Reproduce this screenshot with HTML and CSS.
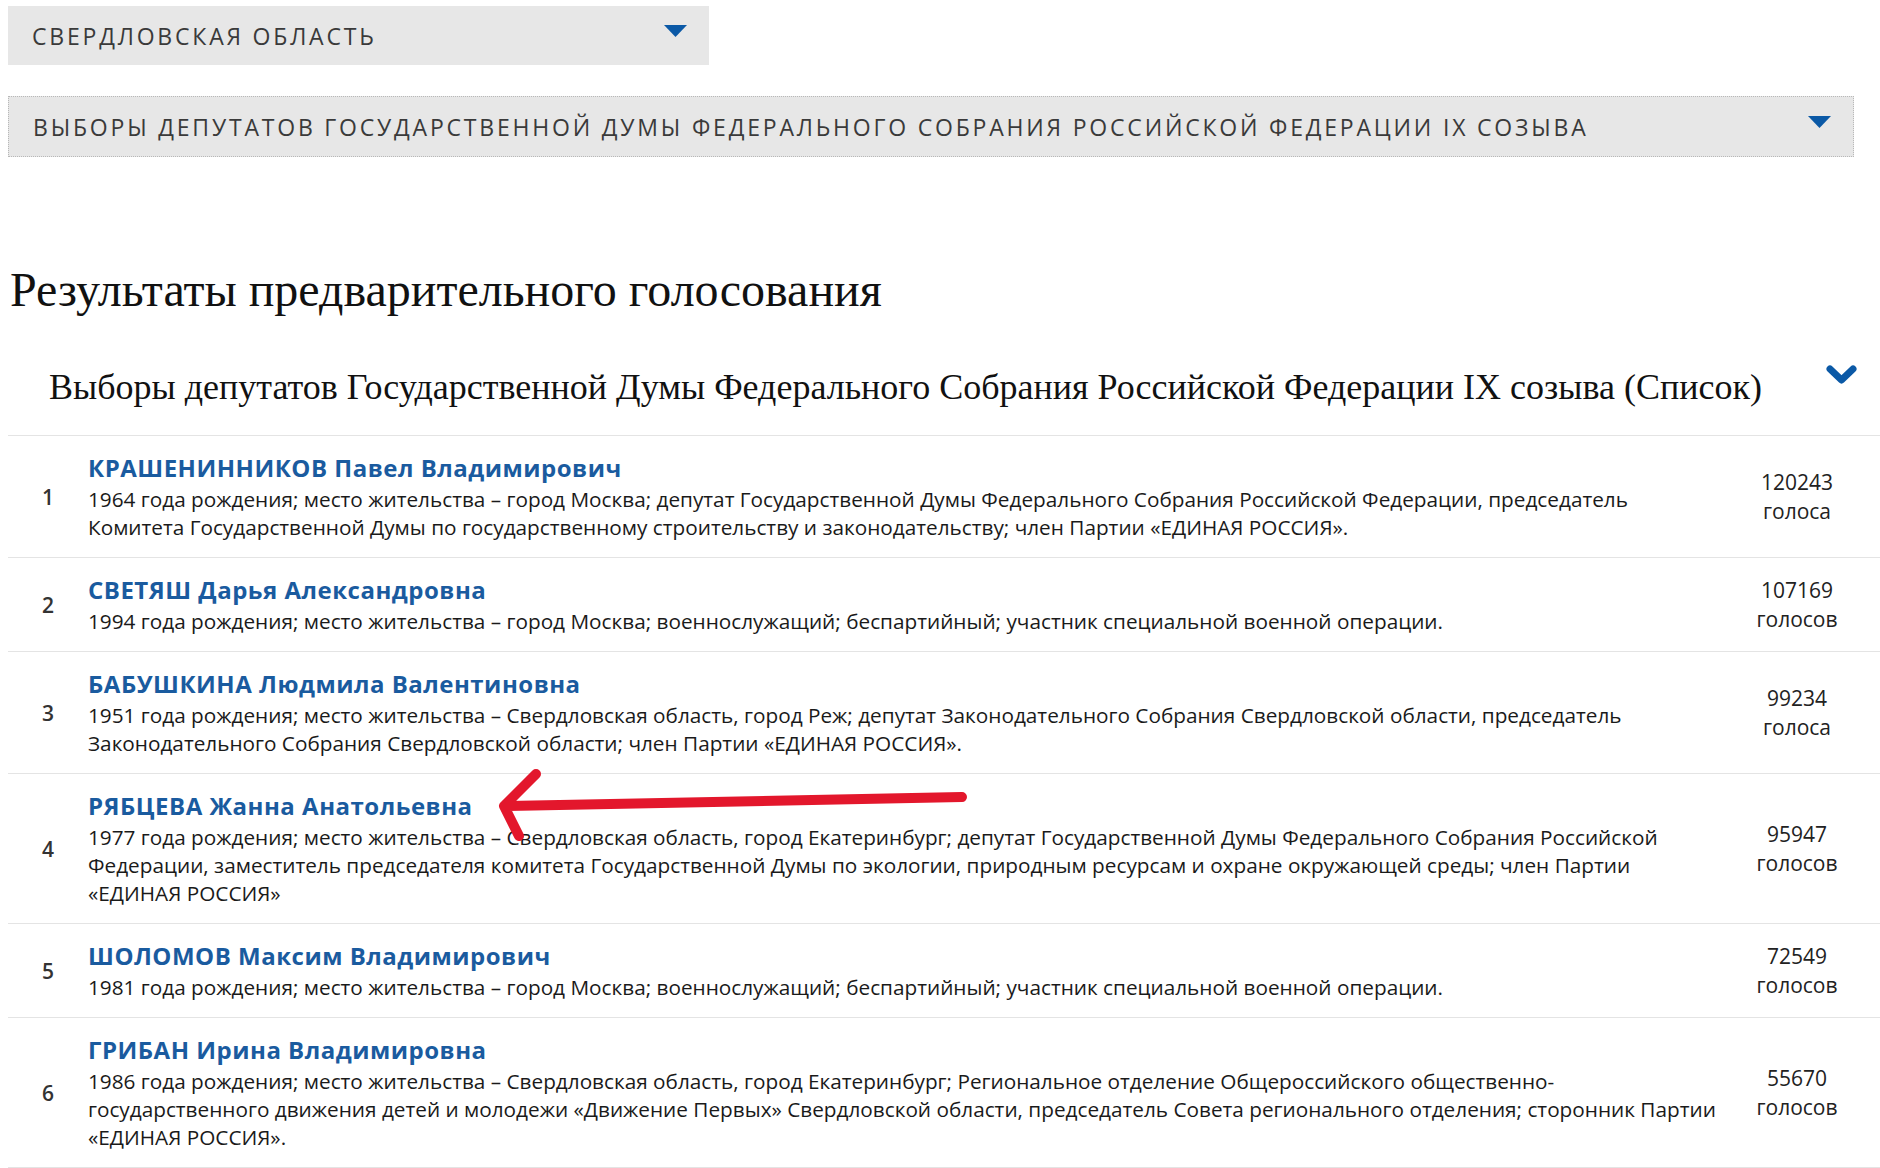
FILE: index.html
```html
<!DOCTYPE html>
<html lang="ru">

<head>
  <meta charset="UTF-8" />
  <meta name="viewport" content="width=device-width, initial-scale=1.0" />
  <title>Результаты предварительного голосования</title>
  <link rel="stylesheet" href="styles.css">
</head>

<body>
  <div class="page">
    <div class="select select-region">
      <span>СВЕРДЛОВСКАЯ ОБЛАСТЬ</span>
      <svg class="caret" width="23" height="12" viewBox="0 0 23 12"><path d="M0 0h23L11.5 12z" fill="#0b59a6"/></svg>
    </div>

    <div class="select select-election">
      <span>ВЫБОРЫ ДЕПУТАТОВ ГОСУДАРСТВЕННОЙ ДУМЫ ФЕДЕРАЛЬНОГО СОБРАНИЯ РОССИЙСКОЙ ФЕДЕРАЦИИ IX СОЗЫВА</span>
      <svg class="caret" width="23" height="12" viewBox="0 0 23 12"><path d="M0 0h23L11.5 12z" fill="#0b59a6"/></svg>
    </div>

    <h1 class="page-title">Результаты предварительного голосования</h1>

    <section class="results">
      <div class="results-head">
        <h2>Выборы депутатов Государственной Думы Федерального Собрания Российской Федерации IX созыва (Список)</h2>
        <svg class="chevron" width="31" height="19" viewBox="0 0 31 19"><path d="M4 4l11.5 11L27 4" fill="none" stroke="#0b59a6" stroke-width="7" stroke-linecap="round" stroke-linejoin="round"/></svg>
      </div>

      <ul class="candidates">
        <li class="candidate">
          <div class="num">1</div>
          <div class="info">
            <a class="name" href="#">КРАШЕНИННИКОВ Павел Владимирович</a>
            <p class="about">1964 года рождения; место жительства – город Москва; депутат Государственной Думы Федерального Собрания Российской Федерации, председатель Комитета Государственной Думы по государственному строительству и законодательству; член Партии «ЕДИНАЯ РОССИЯ».</p>
          </div>
          <div class="votes">120243<br>голоса</div>
        </li>
        <li class="candidate">
          <div class="num">2</div>
          <div class="info">
            <a class="name" href="#">СВЕТЯШ Дарья Александровна</a>
            <p class="about">1994 года рождения; место жительства – город Москва; военнослужащий; беспартийный; участник специальной военной операции.</p>
          </div>
          <div class="votes">107169<br>голосов</div>
        </li>
        <li class="candidate">
          <div class="num">3</div>
          <div class="info">
            <a class="name" href="#">БАБУШКИНА Людмила Валентиновна</a>
            <p class="about">1951 года рождения; место жительства – Свердловская область, город Реж; депутат Законодательного Собрания Свердловской области, председатель Законодательного Собрания Свердловской области; член Партии «ЕДИНАЯ РОССИЯ».</p>
          </div>
          <div class="votes">99234<br>голоса</div>
        </li>
        <li class="candidate">
          <div class="num">4</div>
          <div class="info">
            <a class="name" href="#">РЯБЦЕВА Жанна Анатольевна</a>
            <p class="about">1977 года рождения; место жительства – Свердловская область, город Екатеринбург; депутат Государственной Думы Федерального Собрания Российской Федерации, заместитель председателя комитета Государственной Думы по экологии, природным ресурсам и охране окружающей среды; член Партии «ЕДИНАЯ РОССИЯ»</p>
          </div>
          <div class="votes">95947<br>голосов</div>
        </li>
        <li class="candidate">
          <div class="num">5</div>
          <div class="info">
            <a class="name" href="#">ШОЛОМОВ Максим Владимирович</a>
            <p class="about">1981 года рождения; место жительства – город Москва; военнослужащий; беспартийный; участник специальной военной операции.</p>
          </div>
          <div class="votes">72549<br>голосов</div>
        </li>
        <li class="candidate">
          <div class="num">6</div>
          <div class="info">
            <a class="name" href="#">ГРИБАН Ирина Владимировна</a>
            <p class="about">1986 года рождения; место жительства – Свердловская область, город Екатеринбург; Региональное отделение Общероссийского общественно-государственного движения детей и молодежи «Движение Первых» Свердловской области, председатель Совета регионального отделения; сторонник Партии «ЕДИНАЯ РОССИЯ».</p>
          </div>
          <div class="votes">55670<br>голосов</div>
        </li>
      </ul>
    </section>
  </div>

  <!-- пометка поверх страницы -->
  <svg class="mark" width="1880" height="1168" viewBox="0 0 1880 1168">
    <path d="M962 797L504 806M536 774L504 806L519 836" fill="none" stroke="#e3172c" stroke-width="10" stroke-linecap="round" stroke-linejoin="round"/>
  </svg>
</body>

</html>
```

FILE: styles.css
```css
body {
  margin: 0;
  background-color: #ffffff;
  color: #1a1a1a;
  font-family: 'Open Sans', 'Noto Sans', sans-serif;
  overflow: hidden;
}

.page {
  position: relative;
  padding: 6px 0 0 8px;
}

.select {
  display: flex;
  align-items: center;
  justify-content: space-between;
  box-sizing: border-box;
  background-color: #e7e7e7;
  color: #3a3a3a;
  font-size: 23px;
  letter-spacing: 2.8px;
  padding: 0 22px 0 24px;
  white-space: nowrap;
}

.select-region {
  width: 701px;
  height: 59px;
}

.select-election {
  width: 1846px;
  height: 61px;
  margin-top: 31px;
  border: 1px dotted #b8b8b8;
}

.caret {
  margin-top: -9px;
  flex-shrink: 0;
}

.page-title {
  font-family: 'Liberation Serif', serif;
  font-weight: normal;
  font-size: 48px;
  line-height: 56px;
  color: #111;
  margin: 105px 0 0 2px;
}

.results-head {
  display: flex;
  align-items: flex-start;
  justify-content: space-between;
  padding: 47px 23px 26px 41px;
  border-bottom: 1px solid #e4e4e4;
}

.results-head h2 {
  font-family: 'Liberation Serif', serif;
  font-weight: normal;
  font-size: 36px;
  line-height: 44px;
  color: #111;
  margin: 0;
}

.candidates {
  list-style: none;
  margin: 0;
  padding: 0;
}

.candidate {
  display: grid;
  grid-template-columns: 80px 1fr 154px;
  align-items: center;
  padding: 17px 6px 16px 0;
  border-bottom: 1px solid #e4e4e4;
}

.num {
  text-align: center;
  font-size: 21px;
  font-weight: 600;
  color: #333;
}

.name {
  display: block;
  font-size: 24px;
  line-height: 30px;
  font-weight: 700;
  letter-spacing: 0.5px;
  color: #1a5b9f;
  text-decoration: none;
}

.about {
  margin: 2px 0 0;
  font-size: 20.75px;
  line-height: 28px;
}

.votes {
  text-align: center;
  font-size: 21px;
  line-height: 29px;
  color: #222;
}

.mark {
  position: absolute;
  top: 0;
  left: 0;
  pointer-events: none;
}
```
